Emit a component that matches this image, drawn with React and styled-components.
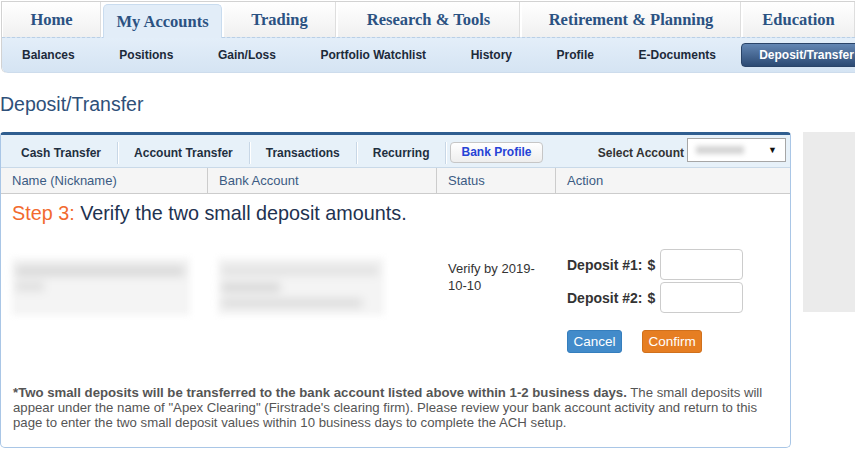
import React from "react";
import styled, { createGlobalStyle } from "styled-components";

const GlobalStyle = createGlobalStyle`
  html, body {
    margin: 0;
    padding: 0;
    background: #ffffff;
    font-family: "Liberation Sans", Arial, sans-serif;
    overflow: hidden;
  }
`;

const Page = styled.div`
  width: 855px;
`;

const TopNav = styled.div`
  margin: 1px 0 0 1px;
  border-top: 1px solid #d2d2d2;
  border-left: 1px solid #d2d2d2;
  border-bottom-left-radius: 6px;
  overflow: hidden;
`;

const TabRow = styled.div`
  display: flex;
  gap: 2px;
  height: 35px;
  padding-left: 1px;
  background: #ffffff;
`;

const Tab = styled.div`
  flex: ${(p) => (p.$w ? `0 0 ${p.$w}px` : "1")};
  display: flex;
  align-items: center;
  justify-content: center;
  box-sizing: border-box;
  padding-top: 1px;
  font-family: "Liberation Serif", Georgia, serif;
  font-weight: bold;
  font-size: 16.5px;
  color: #2b5282;
  white-space: nowrap;
  background: ${(p) =>
    p.$active ? "#e2edf8" : "linear-gradient(#ffffff, #f0f0f0)"};
  border-right: ${(p) => (p.$active ? "1px solid #c9dcef" : "1px solid #dedede")};
  border-left: ${(p) => (p.$active ? "1px solid #c9dcef" : "none")};
  border-top: ${(p) => (p.$active ? "1px solid #c9dcef" : "none")};
  border-radius: ${(p) => (p.$active ? "5px 5px 0 0" : "0")};
  margin-top: ${(p) => (p.$active ? "2px" : "0")};
  margin-bottom: ${(p) => (p.$active ? "-1px" : "0")};
  position: relative;
  z-index: ${(p) => (p.$active ? 1 : 0)};
`;

const SubNav = styled.div`
  display: flex;
  align-items: center;
  height: 34px;
  background: linear-gradient(#e3eef9, #d5e4f3);
  border-top: 1px dashed #b9cfe6;
  border-bottom: 1px solid #cddcec;
  border-bottom-left-radius: 6px;
  overflow: hidden;
`;

const SubItem = styled.div`
  padding: 0 22.3px;
  font-size: 12px;
  font-weight: bold;
  color: #1c2a3a;
  white-space: nowrap;
  &:first-child {
    padding-left: 20px;
  }
`;

const SubActive = styled.div`
  margin-left: 3px;
  height: 22px;
  line-height: 22px;
  padding: 0 17px;
  border: 1px solid #2a4468;
  border-radius: 4px;
  background: linear-gradient(#6386b3, #2c4a73);
  color: #ffffff;
  font-size: 12px;
  font-weight: bold;
  white-space: nowrap;
`;

const Heading = styled.h1`
  margin: 20px 0 17px;
  font-size: 19.5px;
  line-height: 22px;
  font-weight: normal;
  color: #2e5079;
`;

const Content = styled.div`
  display: flex;
  align-items: flex-start;
  gap: 12px;
`;

const Panel = styled.div`
  width: 791px;
  box-sizing: border-box;
  border: 1px solid #a9c6e6;
  border-top: 3px solid #2f5e90;
  border-radius: 4px 4px 5px 5px;
`;

const SideBox = styled.div`
  flex: 1;
  height: 180px;
  background: #ebebeb;
`;

const Toolbar = styled.div`
  display: flex;
  align-items: center;
  height: 29px;
  padding: 3px 0 0 4px;
  background: #e7f1f9;
  border-bottom: 1px solid #c9d9e8;
`;

const ToolTab = styled.div`
  padding: 0 16px;
  font-size: 12px;
  font-weight: bold;
  color: #1f2f40;
  white-space: nowrap;
`;

const ToolSep = styled.div`
  width: 1px;
  height: 22px;
  background: #c8d7e6;
  box-shadow: 1px 0 0 #ffffff;
`;

const ProfileButton = styled.div`
  margin-left: 4px;
  height: 19px;
  line-height: 19px;
  padding: 0 10px;
  border: 1px solid #c6c6c6;
  border-radius: 4px;
  background: linear-gradient(#ffffff, #eeeeee);
  color: #2643d6;
  font-size: 12px;
  font-weight: bold;
  white-space: nowrap;
`;

const SelectWrap = styled.div`
  margin-left: auto;
  margin-right: 4px;
  display: flex;
  align-items: center;
  gap: 3px;
  font-size: 12px;
  font-weight: bold;
  color: #333333;
`;

const SelectBox = styled.div`
  width: 99px;
  height: 24px;
  box-sizing: border-box;
  border: 1px solid #a6a6a6;
  background: #ffffff;
  display: flex;
  align-items: center;
  justify-content: space-between;
  padding: 0 8px;
  font-size: 9px;
  color: #111111;
  margin-top: -5px;
`;

const Blur = styled.div`
  width: ${(p) => p.$w}px;
  height: ${(p) => p.$h}px;
  background: ${(p) => p.$c || "#d9d9d9"};
  filter: blur(${(p) => p.$b || 3}px);
  margin-bottom: ${(p) => p.$mb || 0}px;
`;

const GridRow = styled.div`
  display: grid;
  grid-template-columns: 207px 229px 119px 1fr;
`;

const HeadRow = styled(GridRow)`
  height: 25px;
  background: #f5f5f5;
  border-bottom: 1px solid #cccccc;
`;

const HeadCell = styled.div`
  padding-left: 11px;
  line-height: 25px;
  font-size: 13px;
  color: #3b5b83;
  border-right: ${(p) => (p.$last ? "none" : "1px solid #cccccc")};
`;

const Step = styled.div`
  padding: 7px 11px 0;
  font-size: 19.8px;
  line-height: 24px;
  color: #1e3250;
`;

const StepLabel = styled.span`
  color: #f26a2e;
`;

const DataRow = styled(GridRow)`
  margin-top: 24px;
`;

const Cell = styled.div`
  padding: ${(p) => p.$top || 0}px 8px 0 11px;
`;

const BlurCard = styled.div`
  width: ${(p) => p.$w}px;
  height: 57px;
  box-sizing: border-box;
  padding: 8px 4px;
  background: #f4f4f4;
  filter: blur(3px);
  margin-left: ${(p) => p.$ml || 0}px;
`;

const StatusText = styled.div`
  font-size: 13px;
  line-height: 17px;
  color: #333333;
`;

const DepositGrid = styled.div`
  display: grid;
  grid-template-columns: auto auto 83px;
  justify-content: start;
  column-gap: 5px;
  row-gap: 2px;
  align-items: center;
  font-size: 14px;
  font-weight: bold;
  color: #333333;
`;

const AmountInput = styled.input`
  width: 83px;
  height: 31px;
  box-sizing: border-box;
  border: 1px solid #cccccc;
  border-radius: 4px;
  background: #ffffff;
`;

const Actions = styled.div`
  display: flex;
  gap: 20px;
  margin-top: 17px;
`;

const ActionButton = styled.button`
  height: 23px;
  padding: 0 5.5px;
  border: 1px solid ${(p) => (p.$primary ? "#d0701c" : "#357ebd")};
  border-radius: 3px;
  background: ${(p) => (p.$primary ? "#e67e22" : "#428bca")};
  color: #ffffff;
  font-family: "Liberation Sans", Arial, sans-serif;
  font-size: 13.5px;
  line-height: 21px;
`;

const Note = styled.p`
  margin: 32px 0 0;
  padding: 0 12px 17px;
  font-size: 13.2px;
  line-height: 15px;
  color: #555555;
`;

const topTabs = [
  { label: "Home", w: 98 },
  { label: "My Accounts", w: 119, active: true },
  { label: "Trading", w: 112 },
  { label: "Research & Tools", w: 182 },
  { label: "Retirement & Planning", w: 219 },
  { label: "Education" },
];

const subItems = [
  "Balances",
  "Positions",
  "Gain/Loss",
  "Portfolio Watchlist",
  "History",
  "Profile",
  "E-Documents",
];

const toolTabs = ["Cash Transfer", "Account Transfer", "Transactions", "Recurring"];

export default function App() {
  return (
    <Page>
      <GlobalStyle />
      <TopNav>
        <TabRow>
          {topTabs.map((t) => (
            <Tab key={t.label} $w={t.w} $active={t.active}>
              {t.label}
            </Tab>
          ))}
        </TabRow>
        <SubNav>
          {subItems.map((s) => (
            <SubItem key={s}>{s}</SubItem>
          ))}
          <SubActive>Deposit/Transfer</SubActive>
        </SubNav>
      </TopNav>

      <Heading>Deposit/Transfer</Heading>

      <Content>
        <Panel>
          <Toolbar>
            {toolTabs.map((t) => (
              <React.Fragment key={t}>
                <ToolTab>{t}</ToolTab>
                <ToolSep />
              </React.Fragment>
            ))}
            <ProfileButton>Bank Profile</ProfileButton>
            <SelectWrap>
              Select Account
              <SelectBox>
                <Blur $w={48} $h={8} $c="#d4d4d4" $b={2.5} />
                <span>▼</span>
              </SelectBox>
            </SelectWrap>
          </Toolbar>

          <HeadRow>
            <HeadCell>Name (Nickname)</HeadCell>
            <HeadCell>Bank Account</HeadCell>
            <HeadCell>Status</HeadCell>
            <HeadCell $last>Action</HeadCell>
          </HeadRow>

          <Step>
            <StepLabel>Step 3:</StepLabel> Verify the two small deposit amounts.
          </Step>

          <DataRow>
            <Cell $top={9}>
              <BlurCard $w={178}>
                <Blur $w={168} $h={10} $c="#d8d8d8" $mb={6} />
                <Blur $w={28} $h={9} $c="#dedede" />
              </BlurCard>
            </Cell>
            <Cell $top={9}>
              <BlurCard $w={166} $ml={-1}>
                <Blur $w={156} $h={9} $c="#e0e0e0" $mb={8} />
                <Blur $w={58} $h={9} $c="#d6d6d6" $mb={7} />
                <Blur $w={140} $h={8} $c="#dadada" />
              </BlurCard>
            </Cell>
            <Cell $top={11}>
              <StatusText>Verify by 2019-10-10</StatusText>
            </Cell>
            <Cell>
              <DepositGrid>
                <span>Deposit #1:</span>
                <span>$</span>
                <AmountInput />
                <span>Deposit #2:</span>
                <span>$</span>
                <AmountInput />
              </DepositGrid>
              <Actions>
                <ActionButton>Cancel</ActionButton>
                <ActionButton $primary>Confirm</ActionButton>
              </Actions>
            </Cell>
          </DataRow>

          <Note>
            <b>
              *Two small deposits will be transferred to the bank account listed
              above within 1-2 business days.
            </b>{" "}
            The small deposits will appear under the name of "Apex Clearing"
            (Firstrade's clearing firm). Please review your bank account activity
            and return to this page to enter the two small deposit values within
            10 business days to complete the ACH setup.
          </Note>
        </Panel>
        <SideBox />
      </Content>
    </Page>
  );
}
